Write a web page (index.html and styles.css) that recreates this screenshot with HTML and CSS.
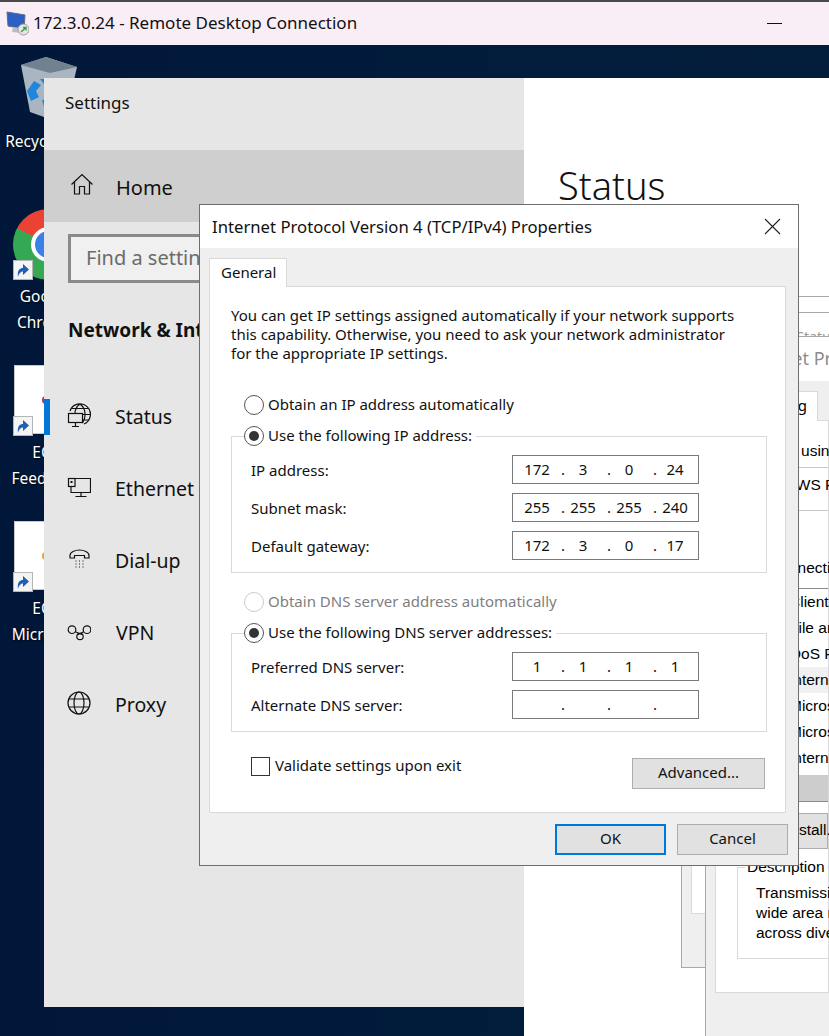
FILE: index.html

```html
<!DOCTYPE html>
<html>
<head>
<meta charset="utf-8">
<title>172.3.0.24 - Remote Desktop Connection</title>
<link rel="stylesheet" href="styles.css">
</head>
<body>
<div class="rdp-bar">
  <svg class="rdp-icon" width="24" height="26" viewBox="0 0 24 26">
    <path d="M2 2 L20 5 L19 19 L3 16 Z" fill="#2a5fc4" stroke="#5d6b85"/>
    <path d="M8 17 L15 18 L17 23 L7 22 Z" fill="#b9bec6"/>
    <circle cx="18.500" cy="19.500" r="5.500" fill="#e6e6e6" stroke="#9a9a9a"/>
    <path d="M16 22 L21 17.500 M18 17.500 H21 V20.500" fill="none" stroke="#2f9a4a" stroke-width="1.300"/>
  </svg>
  <span class="rdp-title">172.3.0.24 - Remote Desktop Connection</span>
  <span class="rdp-min"></span>
</div>

<div class="desktop">
  <div class="desk-icon bin-icon">
    <svg width="60" height="64" viewBox="0 0 60 64">
      <path d="M1 10 L26 2 L57 12 L46 60 L24 62 L10 57 Z" fill="#a9b6c2"/>
      <path d="M1 10 L26 2 L57 12 L30 18 Z" fill="#71818f"/>
      <path d="M7 36 L14 26 L21 30 L16 36 L19 42 L11 46 Z M20 24 L32 24 L36 31 L27 33 Z M22 45 L34 43 L34 50 L24 52 Z" fill="#1f86dc"/>
    </svg>
    <span class="desk-label">Recycle Bin</span>
  </div>
  <div class="desk-icon chrome-icon">
    <div class="chrome"><div class="chrome-eye"></div></div>
    <svg class="shortcut" width="20" height="20" viewBox="0 0 20 20"><rect x="0.500" y="0.500" width="19" height="19" fill="#f4f4f4" stroke="#b5b5b5"/><path d="M5 17 C4 10 7 8 10 8 V4 L16 9.500 L10 15 V11.500 C8 11.500 6 13 5 17 Z" fill="#1d5fb5"/></svg>
    <span class="desk-label">Google Chrome</span>
  </div>
  <div class="desk-icon doc-icon">
    <div class="doc"><span class="doc-mark mark-red"></span></div>
    <svg class="shortcut" width="20" height="20" viewBox="0 0 20 20"><rect x="0.500" y="0.500" width="19" height="19" fill="#f4f4f4" stroke="#b5b5b5"/><path d="M5 17 C4 10 7 8 10 8 V4 L16 9.500 L10 15 V11.500 C8 11.500 6 13 5 17 Z" fill="#1d5fb5"/></svg>
    <span class="desk-label">EC2 Feedback</span>
  </div>
  <div class="desk-icon doc-icon doc-two">
    <div class="doc"><span class="doc-mark mark-orange"></span></div>
    <svg class="shortcut" width="20" height="20" viewBox="0 0 20 20"><rect x="0.500" y="0.500" width="19" height="19" fill="#f4f4f4" stroke="#b5b5b5"/><path d="M5 17 C4 10 7 8 10 8 V4 L16 9.500 L10 15 V11.500 C8 11.500 6 13 5 17 Z" fill="#1d5fb5"/></svg>
    <span class="desk-label">EC2 Microsoft</span>
  </div>
</div>

<div class="settings">
  <div class="sidebar">
    <div class="side-title">Settings</div>
    <div class="nav-row nav-home">
      <svg class="nav-icon" width="24" height="24" viewBox="0 0 24 24" fill="none" stroke="#111" stroke-width="1.200"><path d="M1.500 12.500 L12 2.500 L22.500 12.500 M4.500 10 V22 H9.500 V14.500 H14.500 V22 H19.500 V10"/></svg>
      <span>Home</span>
    </div>
    <div class="search">Find a setting</div>
    <div class="side-head">Network &amp; Internet</div>
    <div class="nav-row active">
      <svg class="nav-icon" width="24" height="24" viewBox="0 0 24 24" fill="none" stroke="#111" stroke-width="1.200"><path d="M3 8 A10.500 10.500 0 1 1 17 21 M13 1 C9 4 8 7 8 10 M13 1 C17 4 18 8 18 11 C18 15 17 18 15 20 M4 5.500 H22 M16 11.500 H23.500 M15.500 17 H21.500"/><rect x="1.500" y="10.500" width="14" height="9" fill="#e6e6e6"/><path d="M8.500 19.500 V23 M5 23.500 H12"/></svg>
      <span>Status</span>
    </div>
    <div class="nav-row">
      <svg class="nav-icon" width="24" height="24" viewBox="0 0 24 24" fill="none" stroke="#111" stroke-width="1.200"><path d="M7.500 3.500 H23.500 V17.500 H4 V12"/><rect x="1.500" y="3.500" width="6.500" height="8"/><rect x="3.500" y="6" width="2" height="2" fill="#111" stroke="none"/><path d="M14 17.500 V21.500 M8.500 21.500 H19.500"/></svg>
      <span>Ethernet</span>
    </div>
    <div class="nav-row">
      <svg class="nav-icon" width="24" height="24" viewBox="0 0 24 24" fill="none" stroke="#111" stroke-width="1.200"><path d="M3 11 V8.500 C3 5 8 3 12.500 3 C17 3 22 5 22 8.500 V11 H17.500 V8.500 H7.500 V11 Z"/><path d="M8.500 14 H9.500 M12 14 H13 M15.500 14 H16.500 M8.500 17 H9.500 M12 17 H13 M15.500 17 H16.500 M8.500 20 H9.500 M12 20 H13 M15.500 20 H16.500"/></svg>
      <span>Dial-up</span>
    </div>
    <div class="nav-row">
      <svg class="nav-icon vpn-icon" width="24" height="24" viewBox="0 0 24 24" fill="none" stroke="#111" stroke-width="1.200"><circle cx="5" cy="8.700" r="3.800"/><circle cx="20" cy="8.700" r="3.800"/><circle cx="13" cy="15.500" r="3.200"/><path d="M8.300 10.700 L15.500 13.800 M16.700 10.700 L10.500 13.800"/></svg>
      <span class="nav-vpn">VPN</span>
    </div>
    <div class="nav-row">
      <svg class="nav-icon" width="24" height="24" viewBox="0 0 24 24" fill="none" stroke="#111" stroke-width="1.200"><circle cx="12" cy="12" r="11"/><ellipse cx="12" cy="12" rx="5" ry="11"/><path d="M2 8 H22 M2 16 H22"/></svg>
      <span>Proxy</span>
    </div>
  </div>
  <div class="settings-main">
    <h1 class="main-title">Status</h1>
    <div class="main-rule"></div>
  </div>
</div>

<div class="back-win status-win">
  <div class="status-title">Ethernet Status</div>
  <div class="status-panel"></div>
</div>

<div class="back-win net-win">
  <div class="net-title">Ethernet Properties</div>
  <div class="net-tabs"><div class="net-tab">Networking</div></div>
  <div class="net-panel">
    <div class="net-label">Connect using:</div>
    <div class="net-adapter">AWS PV Network Device</div>
    <div class="net-label net-label-two">This connection uses the following items:</div>
    <div class="net-list">
      <div class="net-item">Client for Microsoft Networks</div>
      <div class="net-item">File and Printer Sharing</div>
      <div class="net-item">QoS Packet Scheduler</div>
      <div class="net-item selected">Internet Protocol Version 4</div>
      <div class="net-item">Microsoft Network Adapter</div>
      <div class="net-item">Microsoft LLDP Protocol</div>
      <div class="net-item">Internet Protocol Version 6</div>
      <div class="net-scroll"></div>
    </div>
    <div class="net-install">Install...</div>
    <fieldset class="net-desc">
      <legend>Description</legend>
      <p>Transmission Control Protocol<br>wide area network protocol<br>across diverse networks</p>
    </fieldset>
  </div>
</div>

<div class="dialog">
  <div class="dlg-title">
    <span>Internet Protocol Version 4 (TCP/IPv4) Properties</span>
    <svg class="dlg-close" width="17" height="17" viewBox="0 0 17 17" fill="none" stroke="#222" stroke-width="1.100"><path d="M1 1 L16 16 M16 1 L1 16"/></svg>
  </div>
  <div class="dlg-body">
    <div class="tab">General</div>
    <div class="panel">
      <p class="intro">You can get IP settings assigned automatically if your network supports<br>this capability. Otherwise, you need to ask your network administrator<br>for the appropriate IP settings.</p>

      <div class="radio-row first-radio"><span class="radio"></span>Obtain an IP address automatically</div>
      <fieldset class="group">
        <legend><span class="radio checked"></span>Use the following IP address:</legend>
        <div class="field"><span>IP address:</span><div class="ip"><b>172</b><i>.</i><b>3</b><i>.</i><b>0</b><i>.</i><b>24</b></div></div>
        <div class="field"><span>Subnet mask:</span><div class="ip"><b>255</b><i>.</i><b>255</b><i>.</i><b>255</b><i>.</i><b>240</b></div></div>
        <div class="field"><span>Default gateway:</span><div class="ip"><b>172</b><i>.</i><b>3</b><i>.</i><b>0</b><i>.</i><b>17</b></div></div>
      </fieldset>

      <div class="radio-row off dns-radio"><span class="radio"></span>Obtain DNS server address automatically</div>
      <fieldset class="group">
        <legend><span class="radio checked"></span>Use the following DNS server addresses:</legend>
        <div class="field"><span>Preferred DNS server:</span><div class="ip"><b>1</b><i>.</i><b>1</b><i>.</i><b>1</b><i>.</i><b>1</b></div></div>
        <div class="field"><span>Alternate DNS server:</span><div class="ip"><b></b><i>.</i><b></b><i>.</i><b></b><i>.</i><b></b></div></div>
      </fieldset>

      <div class="validate">
        <div class="check-wrap"><span class="check"></span>Validate settings upon exit</div>
        <button class="btn adv">Advanced...</button>
      </div>
    </div>
    <div class="dlg-foot">
      <button class="btn wide default">OK</button>
      <button class="btn wide">Cancel</button>
    </div>
  </div>
</div>
</body>
</html>
```

FILE: styles.css

```css
html, body {
  margin: 0;
  padding: 0;
}
body {
  position: relative;
  width: 829px;
  height: 1036px;
  overflow: hidden;
  font-family: "Noto Sans", sans-serif;
  font-size: 15px;
  color: #111;
  background: #021b3a;
}

/* remote desktop title bar */
.rdp-bar {
  display: flex;
  align-items: center;
  box-sizing: border-box;
  height: 45px;
  padding-bottom: 1px;
  border-top: 2px solid #4a4a4a;
  background: #f9edf6;
}
.rdp-icon {
  margin-left: 5px;
}
.rdp-title {
  margin-left: 4px;
  margin-bottom: 2px;
  font-size: 17px;
  color: #111;
}
.rdp-min {
  margin-left: auto;
  margin-right: 47px;
  width: 15px;
  height: 1px;
  background: #111;
}

/* desktop */
.desktop {
  height: 991px;
  background: linear-gradient(90deg, #01173a 0, #021c3c 60%, #021d3a 100%);
}
.desk-icon {
  position: absolute;
  left: 0;
  width: 92px;
}
.desk-icon svg, .chrome, .doc {
  position: absolute;
}
.desk-label {
  position: absolute;
  left: 0;
  right: 0;
  text-align: center;
  color: #fff;
  font-size: 15.500px;
  line-height: 26px;
  text-shadow: 1px 1px 2px #000;
}
.bin-icon { top: 55px; }
.bin-icon svg { left: 20px; top: 0; }
.bin-icon .desk-label { top: 73px; }
.chrome-icon { top: 209px; }
.chrome {
  left: 13px;
  top: 0;
  width: 71px;
  height: 71px;
  border-radius: 50%;
  background: conic-gradient(#ea4335 0 90deg, #fbbc05 90deg 180deg, #34a853 180deg 298deg, #ea4335 298deg);
}
.chrome-eye {
  margin: 18px;
  width: 27px;
  height: 27px;
  border: 4px solid #fff;
  border-radius: 50%;
  background: #3b7fe8;
}
.shortcut { left: 13px; top: 51px; }
.chrome-icon .desk-label { top: 74px; }
.doc-icon { top: 365px; }
.doc-two { top: 521px; }
.doc {
  left: 14px;
  top: 0;
  width: 60px;
  height: 69px;
  background: #fff;
  box-sizing: border-box;
  border: 1px solid #c8c8c8;
}
.doc-mark {
  display: block;
  margin: 30px 0 0 27px;
  width: 8px;
  height: 8px;
  border-radius: 50%;
}
.mark-red { background: #e2203c; }
.mark-orange { background: #eda11d; }
.doc-icon .desk-label { top: 74px; }

/* settings window */
.settings {
  position: absolute;
  left: 44px;
  top: 78px;
  display: flex;
  align-items: flex-start;
}
.sidebar {
  width: 480px;
  height: 929px;
  background: #e6e6e6;
}
.side-title {
  height: 72px;
  box-sizing: border-box;
  padding: 13px 0 0 21px;
  font-size: 17px;
  line-height: 24px;
}
.nav-row {
  display: flex;
  align-items: center;
  height: 72px;
  padding-left: 23px;
  font-size: 19.500px;
}
.nav-row span {
  margin-bottom: 2px;
}
.nav-icon {
  margin-right: 24px;
  margin-bottom: 4px;
  flex: none;
}
.vpn-icon {
  margin-bottom: 0;
}
.nav-home {
  background: #cfcfcf;
  padding-left: 26px;
  font-size: 20px;
}
.nav-home span {
  margin-bottom: 0;
  margin-top: 3px;
}
.nav-home .nav-icon {
  margin-right: 22px;
}
.active::before {
  content: "";
  width: 6px;
  height: 36px;
  background: #0078d7;
  margin-left: -23px;
  margin-right: 17px;
}
.nav-vpn {
  margin-left: 1px;
}
.search {
  box-sizing: border-box;
  margin: 12px 0 0 24px;
  width: 320px;
  height: 49px;
  padding-left: 15px;
  border: 3px solid #8a8a8a;
  background: #f0f0f0;
  color: #6b6b6b;
  font-size: 20px;
  line-height: 42px;
}
.side-head {
  margin: 29px 0 0 24px;
  height: 69px;
  font-size: 19px;
  font-weight: 700;
  line-height: 36px;
}
.settings-main {
  width: 305px;
  height: 958px;
  background: #fff;
}
.main-title {
  margin: 79px 0 0 34px;
  font-size: 38px;
  font-weight: 300;
  line-height: 56px;
}
.main-rule {
  margin: 83px 0 0 0;
  height: 1px;
  background: #a8a8a8;
}

/* windows behind the dialog */
.back-win {
  position: absolute;
  box-sizing: border-box;
  overflow: hidden;
  border: 1px solid #a8a8a8;
  border-right: 0;
  font-family: "Liberation Sans", sans-serif;
  font-size: 15.500px;
  color: #000;
}
.status-win {
  left: 681px;
  top: 312px;
  width: 148px;
  height: 656px;
  background: #efefef;
}
.status-title {
  height: 44px;
  padding: 14px 0 0 54px;
  box-sizing: border-box;
  background: #fff;
  font-family: "Noto Sans", sans-serif;
  font-size: 14px;
  color: #999;
  white-space: nowrap;
}
.status-panel {
  box-sizing: border-box;
  margin-left: 9px;
  height: 557px;
  border: 1px solid #d9d9d9;
  background: #fff;
}
.net-win {
  left: 705px;
  top: 336px;
  width: 124px;
  height: 700px;
  border-bottom: 0;
  background: #efefef;
}
.net-title {
  height: 44px;
  padding: 9px 0 0 30px;
  box-sizing: border-box;
  background: #fff;
  font-family: "Noto Sans", sans-serif;
  font-size: 18px;
  color: #8c8c8c;
  white-space: nowrap;
}
.net-tabs {
  height: 39px;
  padding: 10px 0 0 9px;
  box-sizing: border-box;
}
.net-tab {
  box-sizing: border-box;
  width: 103px;
  height: 30px;
  padding-right: 10px;
  border: 1px solid #d9d9d9;
  border-bottom: 0;
  background: #fff;
  position: relative;
  text-align: right;
  font-family: "Noto Sans", sans-serif;
  font-size: 15px;
  line-height: 27px;
}
.net-panel {
  box-sizing: border-box;
  margin-left: 9px;
  height: 573px;
  border: 1px solid #d9d9d9;
  background: #fff;
  white-space: nowrap;
}
.net-label {
  margin: 20px 0 0 23px;
  line-height: 20px;
}
.net-label-two {
  margin-top: 47px;
}
.net-adapter {
  margin: 6px 0 0 20px;
  height: 44px;
  padding: 7px 0 0 50px;
  box-sizing: border-box;
  border-top: 1px solid #c8c8c8;
  border-bottom: 1px solid #c8c8c8;
  line-height: 20px;
}
.net-list {
  margin: 10px 0 0 20px;
  border-top: 1px solid #8a8a8a;
  border-bottom: 1px solid #8a8a8a;
}
.net-item {
  height: 26px;
  padding-left: 53px;
  line-height: 26px;
}
.selected {
  background: #f0f0f0;
}
.net-scroll {
  margin-top: 4px;
  height: 26px;
  background: #cdcdcd;
}
.net-install {
  margin: 11px 0 0 50px;
  height: 34px;
  padding-left: 19px;
  background: #e1e1e1;
  border: 1px solid #adadad;
  line-height: 32px;
}
.net-desc {
  margin: 8px 0 0 21px;
  padding: 0 0 0 7px;
  height: 102px;
  box-sizing: border-box;
  border: 1px solid #d9d9d9;
}
.net-desc legend {
  padding: 0 2px;
  margin-left: 0;
  line-height: 20px;
}
.net-desc p {
  margin: 6px 0 0 11px;
  line-height: 20px;
}

/* ipv4 dialog */
.dialog {
  position: absolute;
  left: 199px;
  top: 204px;
  box-sizing: border-box;
  width: 600px;
  height: 662px;
  border: 1px solid #6e6e6e;
  background: #efefef;
}
.dlg-title {
  display: flex;
  align-items: center;
  justify-content: space-between;
  height: 43px;
  padding: 0 17px 0 12px;
  box-sizing: border-box;
  background: #fff;
  font-size: 16.700px;
}
.dlg-close {
  margin-top: -1px;
}
.dlg-body {
  padding: 10px 12px 0 9px;
}
.tab {
  position: relative;
  z-index: 1;
  box-sizing: border-box;
  width: 78px;
  height: 29px;
  margin-bottom: -1px;
  padding-left: 11px;
  border: 1px solid #d9d9d9;
  border-bottom: 0;
  background: #fff;
  line-height: 27px;
}
.panel {
  box-sizing: border-box;
  height: 527px;
  padding: 20px 18px 0 21px;
  border: 1px solid #d9d9d9;
  background: #fff;
}
.intro {
  margin: -1px 0 0 0;
  line-height: 19px;
}
.radio-row, .group legend {
  display: flex;
  align-items: flex-start;
  height: 20px;
  line-height: 18px;
  white-space: nowrap;
}
.radio {
  box-sizing: border-box;
  flex: none;
  display: flex;
  align-items: center;
  justify-content: center;
  width: 20px;
  height: 20px;
  margin-right: 4px;
  border: 1px solid #555;
  border-radius: 50%;
}
.checked::after {
  content: "";
  width: 10px;
  height: 10px;
  border-radius: 50%;
  background: #333;
}
.first-radio {
  margin: 32px 0 11px 13px;
}
.dns-radio {
  margin: 19px 0 11px 13px;
}
.off {
  color: #808080;
}
.off .radio {
  border-color: #ccc;
}
.group {
  margin: 0;
  padding: 9px 0 12px 19px;
  border: 1px solid #d9d9d9;
}
.group legend {
  padding: 0 4px 0 0;
  margin-left: -7px;
}
.field {
  display: flex;
  align-items: center;
  justify-content: space-between;
  padding-right: 67px;
  margin-bottom: 9px;
}
.field:last-child {
  margin-bottom: 0;
}
.ip {
  box-sizing: border-box;
  display: flex;
  width: 187px;
  height: 29px;
  padding-left: 7px;
  border: 1px solid #7a7a7a;
  line-height: 26px;
}
.ip b {
  width: 34px;
  font-weight: 400;
  text-align: center;
}
.ip i {
  width: 12px;
  font-style: normal;
  text-align: center;
  text-indent: 6px;
}
.validate {
  display: flex;
  justify-content: space-between;
  align-items: flex-start;
  margin: 25px 2px 0 20px;
}
.check-wrap {
  display: flex;
  align-items: flex-start;
  height: 19px;
  line-height: 17px;
}
.check {
  box-sizing: border-box;
  width: 19px;
  height: 19px;
  margin-right: 5px;
  border: 1px solid #333;
}
.btn {
  box-sizing: border-box;
  height: 31px;
  border: 1px solid #adadad;
  background: #e1e1e1;
  color: #111;
  font-family: "Noto Sans", sans-serif;
  font-size: 15px;
  padding: 0 0 3px 0;
}
.adv {
  width: 133px;
  margin-top: 1px;
}
.dlg-foot {
  display: flex;
  justify-content: flex-end;
  gap: 11px;
  padding: 11px 0 0 0;
  margin-right: -2px;
}
.wide {
  width: 111px;
}
.default {
  border: 2px solid #0078d7;
}
```
